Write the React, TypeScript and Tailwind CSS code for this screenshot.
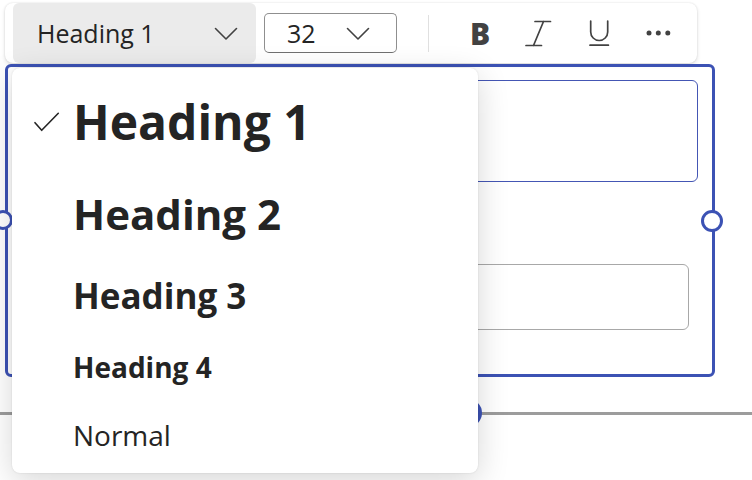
import React from 'react';

const styles = [
  { label: 'Heading 1', size: 'text-[48px] font-bold', h: 'h-[90px]', checked: true },
  { label: 'Heading 2', size: 'text-[42px] font-bold', h: 'h-[94px]', checked: false },
  { label: 'Heading 3', size: 'text-[35px] font-bold', h: 'h-[68px]', checked: false },
  { label: 'Heading 4', size: 'text-[28px] font-bold', h: 'h-[75px]', checked: false },
  { label: 'Normal', size: 'text-[28px] font-normal', h: 'h-[62px]', checked: false },
];

function Chevron() {
  return (
    <svg width="24" height="14" viewBox="0 0 24 14" fill="none">
      <path d="M1.5 1.5 L12 12 L22.5 1.5" stroke="#424242" strokeWidth="1.6" strokeLinecap="round" strokeLinejoin="round" />
    </svg>
  );
}

function Check() {
  return (
    <svg width="28" height="22" viewBox="0 0 28 22" fill="none">
      <path d="M2 11.7 L8.7 19.3 L25.3 2.3" stroke="#242424" strokeWidth="1.6" strokeLinecap="round" strokeLinejoin="round" />
    </svg>
  );
}

function Toolbar() {
  return (
    <div className="ml-[5px] mt-[3px] w-[692px] h-[60px] bg-white rounded-lg shadow-[0_0_2px_rgba(0,0,0,0.12),0_2px_4px_rgba(0,0,0,0.12)] flex items-center pl-2">
      <button className="w-[243px] h-[60px] rounded-md bg-[#ebebeb] flex items-center justify-between pl-[24px] pr-[18px] pt-[2px] text-[25px] text-[#242424]">
        <span>Heading 1</span>
        <Chevron />
      </button>
      <div className="ml-[8px] w-[133px] h-[40px] rounded-[5px] border border-[#8f8f8f] border-b-[#707070] flex items-center justify-between pl-[22px] pr-[26px] pt-[2px] text-[25px] text-[#242424]">
        <span>32</span>
        <Chevron />
      </div>
      <div className="ml-[31px] w-px h-[37px] bg-[#e0e0e0]" />
      <span className="ml-[41px] text-[30px] font-extrabold text-[#424242] leading-none pt-[1px]">B</span>
      <svg className="ml-[35px]" width="27" height="27" viewBox="0 0 27 27" fill="none">
        <path d="M10 1.5 H25.5 M1 25.5 H16.5 M18.5 1.5 L8.5 25.5" stroke="#424242" strokeWidth="1.7" strokeLinecap="round" />
      </svg>
      <svg className="ml-[36px]" width="22" height="28" viewBox="0 0 22 28" fill="none">
        <path d="M2.7 2 V13 A8.5 8.5 0 0 0 19.7 13 V2 M2 26.2 H20.4" stroke="#424242" strokeWidth="1.7" strokeLinecap="round" />
      </svg>
      <svg className="ml-[36px]" width="26" height="8" viewBox="0 0 26 8" fill="#424242">
        <circle cx="3" cy="4" r="2.5" />
        <circle cx="12.3" cy="4" r="2.5" />
        <circle cx="21.8" cy="4" r="2.5" />
      </svg>
    </div>
  );
}

function Frame() {
  return (
    <div className="relative ml-[5px] mt-px w-[710px] h-[313px] border-[3px] border-[#3c52b4] rounded-md">
      <div className="ml-[14px] mr-[14px] mt-[13px] h-[102px] rounded-md border border-[#4456b4]" />
      <div className="ml-[14px] mr-[23px] mt-[82px] h-[66px] rounded-md border border-[#a8a8a8]" />
      <span className="absolute -left-[15px] top-[143px] w-[20px] h-[20px] rounded-full bg-white border-[3px] border-[#3c52b4]" />
      <span className="absolute left-[693px] top-[143px] w-[22px] h-[22px] rounded-full bg-white border-[3px] border-[#3c52b4]" />
    </div>
  );
}

function Slider() {
  return (
    <div className="relative mt-[35px] h-[3px] bg-[#9c9c9c]">
      <span className="absolute left-[454px] -top-[13px] w-[28px] h-[28px] rounded-full bg-[#3c52b4]" />
    </div>
  );
}

function StyleMenu() {
  return (
    <div className="absolute left-[12px] top-[68px] w-[466px] h-[405px] rounded-lg bg-white shadow-[0_0_2px_rgba(0,0,0,0.12),0_8px_32px_rgba(0,0,0,0.16)] pt-[9px]">
      {styles.map((s) => (
        <div key={s.label} className={`flex items-center pl-[21px] ${s.h}`}>
          <div className="w-[40px] flex items-center">{s.checked && <Check />}</div>
          <span className={`${s.size} text-[#242424] leading-none`}>{s.label}</span>
        </div>
      ))}
    </div>
  );
}

export default function App() {
  return (
    <div className="relative w-[752px] h-[480px] overflow-hidden bg-white font-['Open_Sans',sans-serif]">
      <Toolbar />
      <Frame />
      <Slider />
      <StyleMenu />
    </div>
  );
}
